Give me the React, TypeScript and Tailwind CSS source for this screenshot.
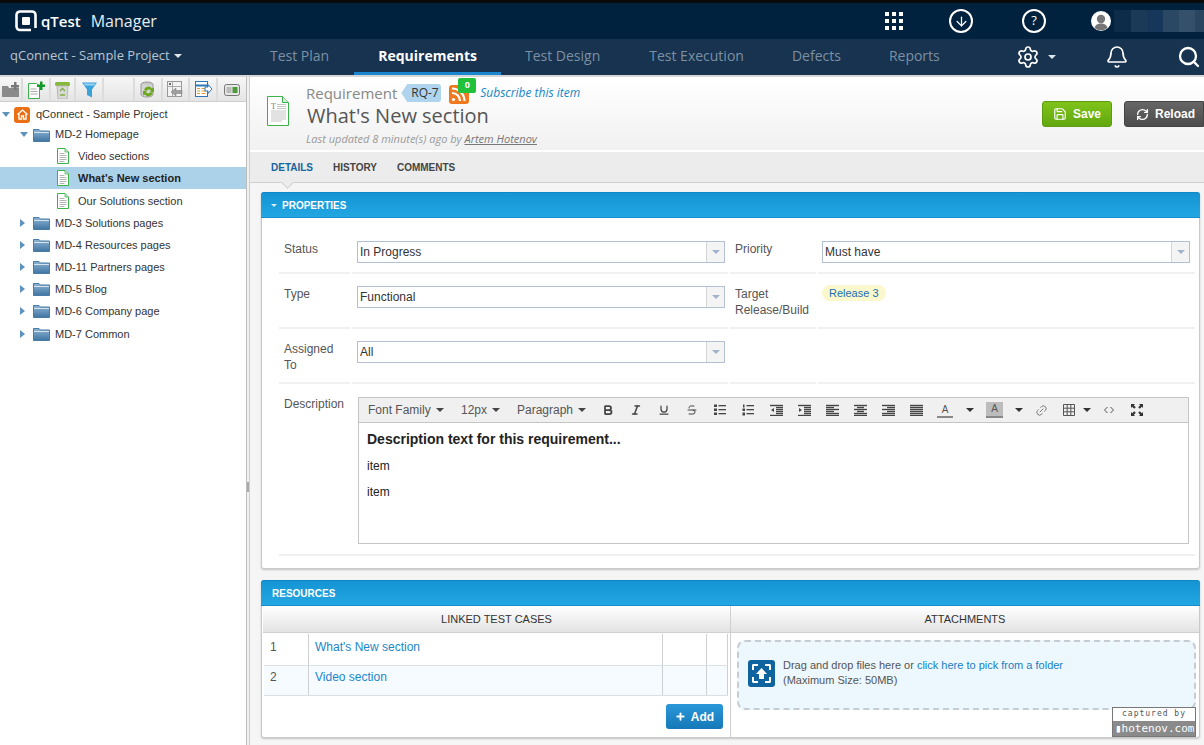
import React from 'react';
import { Bold, Italic, Underline, Strikethrough, Link2, Settings, Bell, Search, Save, RefreshCw, Plus, ArrowDown } from 'lucide-react';

const openSans = "font-['Open_Sans',sans-serif]";

const Caret = ({ className = 'border-t-[#333]' }: { className?: string }) => (
  <span className={`inline-block w-0 h-0 border-x-[4px] border-x-transparent border-t-[4px] ${className}`}></span>
);

const LogoMark = () => (
  <svg width="22" height="22" viewBox="0 0 22 22" className="shrink-0">
    <path d="M5 1.500h12a3.500 3.500 0 0 1 3.500 3.500v15h-15.500a3.500 3.500 0 0 1-3.500-3.500v-11.500a3.500 3.500 0 0 1 3.500-3.500z" fill="none" stroke="#fff" strokeWidth="2.600" />
    <rect x="7" y="7" width="8" height="8" rx="1" fill="#fff" />
    <rect x="16" y="18" width="7" height="5" fill="#00223f" />
  </svg>
);

const GridIcon = () => (
  <svg width="18" height="18" viewBox="0 0 18 18" fill="#fff">
    {[0, 7, 14].map(y => [0, 7, 14].map(x => <rect key={`${x}-${y}`} x={x} y={y} width="4" height="4" />))}
  </svg>
);

const Avatar = () => (
  <svg width="20" height="20" viewBox="0 0 20 20">
    <circle cx="10" cy="10" r="10" fill="#fff" />
    <circle cx="10" cy="8" r="4.200" fill="#777" />
    <path d="M3.500 17c1-3.500 3.500-4.500 6.500-4.500s5.500 1 6.500 4.500a10 10 0 0 1-13 0z" fill="#777" />
  </svg>
);

// tree folder, the blue gradient one
const Folder = () => (
  <svg width="17" height="14" viewBox="0 0 17 14">
    <defs>
      <linearGradient id="fold" x1="0" y1="0" x2="0" y2="1">
        <stop offset="0" stopColor="#8fb4d2" />
        <stop offset="1" stopColor="#3f75a3" />
      </linearGradient>
    </defs>
    <path d="M0.500 1.500h5.500l1.500 1.500h9v10.500h-16z" fill="url(#fold)" stroke="#4a7ba4" />
    <path d="M1 4.500h15" stroke="#d5e4ef" />
  </svg>
);

const DocIcon = () => (
  <svg width="12" height="16" viewBox="0 0 12 16">
    <path d="M0.500 0.500h7.500l3.500 3.500v11.500h-11z" fill="#fff" stroke="#3bb34a" />
    <path d="M8 0.500v3.500h3.500" fill="#bfe6c4" stroke="#3bb34a" strokeWidth="0.700" />
    <path d="M2.500 5.500h5M2.500 7.500h7M2.500 9.500h7M2.500 11.500h7M2.500 13.500h5" stroke="#b5b5b5" />
  </svg>
);

const BigDocIcon = () => (
  <svg width="22" height="30" viewBox="0 0 22 30">
    <path d="M0.500 0.500h15l6 6v23h-21z" fill="#fff" stroke="#3bb34a" />
    <path d="M15.500 0.500v6h6" fill="#d7efda" stroke="#3bb34a" />
    <text x="4" y="13" fontSize="8" fontFamily="Liberation Serif" fill="#777">T</text>
    <path d="M10 8.500h9M10 10.500h9M10 12.500h9M4 15h15M4 17h15M4 19h15M4 21h15M4 23h15M4 25h11" stroke="#c4c4c4" />
  </svg>
);

const Arrow = ({ open }: { open?: boolean }) =>
  open ? (
    <span className="inline-block w-0 h-0 border-x-[4px] border-x-transparent border-t-[5px] border-t-[#5e93bd]"></span>
  ) : (
    <span className="inline-block w-0 h-0 border-y-[4px] border-y-transparent border-l-[5px] border-l-[#5e93bd]"></span>
  );

const ToolBtn = ({ children, w = 'w-[25px]' }: { children?: React.ReactNode; w?: string }) => (
  <div className={`${w} h-full shrink-0 flex items-center justify-center border-r-2 border-r-[#dcdcdc]`}>{children}</div>
);

const TreeToolbar = () => (
  <div className="h-[25px] flex items-stretch bg-gradient-to-b from-[#f7f7f7] to-[#e4e4e4] border-b border-[#cfcfcf] pt-[1px]">
    <ToolBtn w="w-[23px]">
      <svg width="17" height="15" viewBox="0 0 17 15">
        <path d="M0 4h6l1 2h10v9h-17z" fill="#8a8a8a" />
        <path d="M9 3h3v-3h2.500v3h2.500v2.500h-2.500v2.500h-2.500v-2.500h-3z" fill="#777" />
      </svg>
    </ToolBtn>
    <ToolBtn w="w-[28px]">
      <svg width="17" height="18" viewBox="0 0 17 18">
        <path d="M0.500 2.500h8l3 3v12h-11z" fill="#fff" stroke="#3bb34a" />
        <path d="M2.500 8h6M2.500 10.500h7M2.500 13h7" stroke="#aaa" />
        <path d="M9 3.500h3v-3h2.500v3h2.500v2.500h-2.500v3h-2.500v-3h-3z" fill="#129a2a" />
      </svg>
    </ToolBtn>
    <ToolBtn>
      <svg width="15" height="18" viewBox="0 0 15 18">
        <rect x="0" y="1" width="15" height="4" rx="1.500" fill="#86b83a" />
        <path d="M2 5h11l-1 13h-9z" fill="#d9d9d9" stroke="#b8b8b8" />
        <path d="M5 10l2.500-2.500 2.500 2.500M5 14h5" stroke="#7fae3a" strokeWidth="1.300" fill="none" />
      </svg>
    </ToolBtn>
    <ToolBtn w="w-[28px]">
      <svg width="15" height="16" viewBox="0 0 15 16">
        <path d="M0 0.500h15l-5 7v8l-5-2.500v-5.500z" fill="#3aa3dc" />
        <path d="M1.500 1.500h12l-1.500 2h-9z" fill="#9ad4f2" />
      </svg>
    </ToolBtn>
    <ToolBtn w="w-[31px]" />
    <ToolBtn w="w-[28px]">
      <svg width="16" height="18" viewBox="0 0 16 18">
        <ellipse cx="7" cy="3.500" rx="6" ry="2.500" fill="#c8c8c8" stroke="#999" />
        <path d="M1 3.500v10c0 1.400 2.700 2.500 6 2.500s6-1.100 6-2.500v-10" fill="#d4d4d4" stroke="#999" />
        <path d="M4 9a4.500 4.500 0 0 1 8-1.500l2-1v4.500h-4l1-1a2.500 2.500 0 0 0-4.500 0z" fill="#6ca81e" />
        <path d="M13 12a4.500 4.500 0 0 1-8 1.500l-2 1v-4.500h4l-1 1a2.500 2.500 0 0 0 4.500 0z" fill="#6ca81e" />
      </svg>
    </ToolBtn>
    <ToolBtn w="w-[27px]">
      <svg width="17" height="17" viewBox="0 0 17 17">
        <rect x="0.500" y="0.500" width="14" height="15" fill="#f4f4f4" stroke="#999" />
        <path d="M0.500 5.500h14M5.500 0.500v15" stroke="#aaa" />
        <path d="M2 2l2 2M4 2l-2 2" stroke="#666" />
        <path d="M4 11l5-4v2.500h6v3h-6v2.500z" fill="#a0a0a0" stroke="#777" strokeWidth="0.500" />
      </svg>
    </ToolBtn>
    <ToolBtn w="w-[28px]">
      <svg width="17" height="17" viewBox="0 0 17 17">
        <rect x="0.500" y="0.500" width="12" height="15" fill="#fff" stroke="#2f78b7" />
        <path d="M0.500 4.500h12" stroke="#2f78b7" strokeWidth="2" />
        <path d="M2 7.500h3M2 10h3M2 12.500h3M6.500 7.500h4M6.500 10h4M6.500 12.500h4" stroke="#e0a030" />
        <path d="M10 6h3v-2.500l4 4.500-4 4.500v-2.500h-3z" fill="#fff" stroke="#2f78b7" />
      </svg>
    </ToolBtn>
    <div className="flex-1 flex items-center justify-center">
      <svg width="16" height="12" viewBox="0 0 16 12">
        <rect x="0.500" y="0.500" width="15" height="11" rx="2" fill="#e6e6e6" stroke="#777" />
        <rect x="2.500" y="3" width="5" height="6" fill="#bbb" />
        <rect x="8.500" y="3" width="5" height="6" fill="#4d9a3d" />
      </svg>
    </div>
  </div>
);

const FolderRow = ({ label, open, className = 'h-[22px]' }: { label: string; open?: boolean; className?: string }) => (
  <div className={`${className} flex items-center pl-[20px]`}>
    <span className="w-[13px] flex items-center"><Arrow open={open} /></span>
    <Folder />
    <span className="ml-[5px] text-[#333]">{label}</span>
  </div>
);

const DocRow = ({ label, active, className = 'h-[22px]' }: { label: string; active?: boolean; className?: string }) => (
  <div className={`${className} flex items-center pl-[57px] ${active ? 'bg-[#acd2ea] font-bold text-[#222]' : 'text-[#333]'}`}>
    <DocIcon />
    <span className="ml-[9px]">{label}</span>
  </div>
);

const Tree = () => (
  <div className="text-[11px] pt-[3px] font-['Liberation_Sans',sans-serif]">
    <div className="h-[19px] flex items-center pl-[2px]">
      <span className="w-[12px] flex items-center"><Arrow open /></span>
      <span className="w-[16px] h-[16px] rounded-[3px] bg-[#ea6f15] flex items-center justify-center">
        <svg width="11" height="11" viewBox="0 0 11 11" fill="none" stroke="#fff" strokeWidth="1.300">
          <path d="M0.500 5.500l5-4.500 5 4.500M2 5v5h2.500v-3h2v3h2.500v-5" />
        </svg>
      </span>
      <span className="ml-[6px] text-[#333]">qConnect - Sample Project</span>
    </div>
    <FolderRow label="MD-2 Homepage" open className="h-[21px]" />
    <DocRow label="Video sections" />
    <DocRow label="What's New section" active />
    <DocRow label="Our Solutions section" className="h-[23px] pt-[1px]" />
    <FolderRow label="MD-3 Solutions pages" />
    <FolderRow label="MD-4 Resources pages" />
    <FolderRow label="MD-11 Partners pages" />
    <FolderRow label="MD-5 Blog" />
    <FolderRow label="MD-6 Company page" />
    <FolderRow label="MD-7 Common" className="h-[23px] pt-[1px]" />
  </div>
);

const Select = ({ value, className }: { value: string; className: string }) => (
  <div className={`h-[22px] flex items-stretch border border-[#b3bfd3] bg-white ${className}`}>
    <span className="flex-1 pl-[2px] leading-[20px] text-[12px] text-[#333]">{value}</span>
    <span className="w-[18px] border-l border-[#d5d5d5] bg-[#f4f4f4] flex items-center justify-center">
      <Caret className="border-t-[#9fb3cf]" />
    </span>
  </div>
);

const Label = ({ children, className = '' }: { children: React.ReactNode; className?: string }) => (
  <div className={`text-[12px] leading-[16px] text-[#555] ${className}`}>{children}</div>
);

const LinesIcon = ({ rows }: { rows: [number, number][] }) => (
  <svg width="13" height="12" viewBox="0 0 13 12" stroke="#444" strokeWidth="1.400">
    {rows.map(([a, b], i) => <path key={i} d={`M${a} ${1 + i * 2}.5H${b}`} />)}
  </svg>
);

const left: [number, number][] = [[0, 13], [0, 8], [0, 13], [0, 8], [0, 13], [0, 13]];
const center: [number, number][] = [[0, 13], [3, 10], [0, 13], [3, 10], [0, 13], [0, 13]];
const right: [number, number][] = [[0, 13], [5, 13], [0, 13], [5, 13], [0, 13], [0, 13]];
const justify: [number, number][] = [[0, 13], [0, 13], [0, 13], [0, 13], [0, 13], [0, 13]];
const indent: [number, number][] = [[0, 13], [6, 13], [6, 13], [6, 13], [6, 13], [0, 13]];

const EdBtn = ({ children, w = 'w-[28px]' }: { children: React.ReactNode; w?: string }) => (
  <span className={`${w} shrink-0 flex items-center justify-center`}>{children}</span>
);

const EditorToolbar = () => (
  <div className="h-[25px] bg-[#f0f0f0] border-b border-[#c5c5c5] flex items-center text-[12px] text-[#555] pl-[9px]">
    <span className="flex items-center gap-[5px] w-[93px]">Font Family <Caret className="border-t-[#444]" /></span>
    <span className="flex items-center gap-[5px] w-[56px]">12px <Caret className="border-t-[#444]" /></span>
    <span className="flex items-center gap-[5px] w-[77px]">Paragraph <Caret className="border-t-[#444]" /></span>
    <EdBtn><Bold size={12} strokeWidth={3.500} color="#444" /></EdBtn>
    <EdBtn><Italic size={12} strokeWidth={3} color="#444" /></EdBtn>
    <EdBtn><Underline size={12} strokeWidth={2.500} color="#444" /></EdBtn>
    <EdBtn><Strikethrough size={12} strokeWidth={2} color="#444" /></EdBtn>
    <EdBtn>
      <svg width="12" height="12" viewBox="0 0 12 12" fill="#444">
        <rect x="0" y="0.500" width="3" height="2.500" /><rect x="0" y="4.500" width="3" height="2.500" /><rect x="0" y="8.500" width="3" height="2.500" />
        <rect x="4.500" y="1" width="7.500" height="1.300" /><rect x="4.500" y="5" width="7.500" height="1.300" /><rect x="4.500" y="9" width="7.500" height="1.300" />
      </svg>
    </EdBtn>
    <EdBtn>
      <svg width="12" height="12" viewBox="0 0 12 12" fill="#444">
        <rect x="1" y="0.500" width="1.500" height="3" /><rect x="0.500" y="4.500" width="2.500" height="2.500" /><rect x="0.500" y="8.500" width="2.500" height="3" />
        <rect x="4.500" y="1" width="7.500" height="1.300" /><rect x="4.500" y="5" width="7.500" height="1.300" /><rect x="4.500" y="9" width="7.500" height="1.300" />
      </svg>
    </EdBtn>
    <EdBtn>
      <span className="relative flex">
        <LinesIcon rows={indent} />
        <span className="absolute left-[1px] top-[4px] w-0 h-0 border-y-[2px] border-y-transparent border-r-[3px] border-r-[#444]"></span>
      </span>
    </EdBtn>
    <EdBtn>
      <span className="relative flex">
        <LinesIcon rows={indent} />
        <span className="absolute left-[1px] top-[4px] w-0 h-0 border-y-[2px] border-y-transparent border-l-[3px] border-l-[#444]"></span>
      </span>
    </EdBtn>
    <EdBtn><LinesIcon rows={left} /></EdBtn>
    <EdBtn><LinesIcon rows={center} /></EdBtn>
    <EdBtn><LinesIcon rows={right} /></EdBtn>
    <EdBtn><LinesIcon rows={justify} /></EdBtn>
    <EdBtn w="w-[30px]">
      <span className="w-[16px] text-center text-[10px] leading-[13px] border-b-2 border-[#888]">A</span>
    </EdBtn>
    <EdBtn w="w-[19px]"><Caret className="border-t-[#333]" /></EdBtn>
    <EdBtn w="w-[31px]">
      <span className="w-[17px] h-[16px] text-center text-[10px] leading-[14px] bg-[#bcbcbc] border-b-2 border-[#888]">A</span>
    </EdBtn>
    <EdBtn w="w-[17px]"><Caret className="border-t-[#333]" /></EdBtn>
    <EdBtn w="w-[29px]"><Link2 size={13} strokeWidth={1.500} color="#666" className="-rotate-45" /></EdBtn>
    <EdBtn w="w-[26px]">
      <svg width="12" height="12" viewBox="0 0 12 12" fill="none" stroke="#555" strokeWidth="1">
        <path d="M0.500 0.500h11v11h-11zM0.500 4.200h11M0.500 7.800h11M4.200 0.500v11M7.800 0.500v11" />
      </svg>
    </EdBtn>
    <EdBtn w="w-[10px]"><Caret className="border-t-[#333]" /></EdBtn>
    <EdBtn w="w-[34px]">
      <svg width="10" height="8" viewBox="0 0 10 8" fill="none" stroke="#555"><path d="M3.500 1l-3 3 3 3M6.500 1l3 3-3 3" /></svg>
    </EdBtn>
    <EdBtn w="w-[21px]">
      <svg width="12" height="12" viewBox="0 0 12 12" fill="#333">
        <path d="M0 0h4l-1.200 1.200 2 2-1.600 1.600-2-2-1.200 1.200zM12 0v4l-1.200-1.200-2 2-1.600-1.600 2-2-1.200-1.200zM0 12v-4l1.200 1.200 2-2 1.600 1.600-2 2 1.200 1.200zM12 12h-4l1.200-1.200-2-2 1.600-1.600 2 2 1.200-1.200z" />
      </svg>
    </EdBtn>
  </div>
);

const SectionBar = ({ children, className }: { children: React.ReactNode; className?: string }) => (
  <div className={`bg-gradient-to-b from-[#1494d4] to-[#22a7e2] border-t border-[#0f86c6] rounded-t-[3px] border-b border-b-[#1a8ccb] flex items-center text-white font-bold text-[10px] uppercase ${className}`}>
    {children}
  </div>
);

const ColHead = ({ children }: { children: React.ReactNode }) => (
  <div className="h-[27px] pt-[1px] flex items-center justify-center text-[11px] text-[#333] bg-gradient-to-b from-white to-[#e3e3e3] border-b border-[#cfcfcf]">{children}</div>
);

const TestRow = ({ n, label, alt }: { n: number; label: string; alt?: boolean }) => (
  <div className={`flex items-stretch border-b border-[#dcdfe3] ${alt ? 'h-[30px] bg-[#f6fbff]' : 'h-[32px] bg-white'}`}>
    <span className={`w-[45px] pl-[6px] text-[#555] border-r border-[#cfcfcf] ${alt ? 'pt-[2px]' : 'pt-[4px]'}`}>{n}</span>
    <span className={`flex-1 pl-[6px] text-[#1a87c9] ${alt ? 'pt-[2px]' : 'pt-[4px]'}`}>{label}</span>
    <span className="w-[44px] border-l border-[#cfcfcf]"></span>
    <span className="w-[22px] border-l border-r border-[#cfcfcf]"></span>
  </div>
);

export default function App() {
  return (
    <div className="w-[1204px] h-[745px] overflow-hidden flex flex-col bg-[#f5f5f5] font-['Liberation_Sans',sans-serif]">
      <div className="h-[3px] bg-[#0a0a0a] shrink-0"></div>

      {/* top bar */}
      <div className="h-[36px] shrink-0 bg-[#00223f] flex items-center pl-[15px]">
        <div className="w-[870px] flex items-center">
          <LogoMark />
          <span className={`ml-[4px] text-white text-[15px] font-semibold ${openSans}`}>qTest</span>
          <span className={`ml-[10px] text-[#e8edf2] text-[16px] ${openSans}`}>Manager</span>
        </div>
        <GridIcon />
        <span className="ml-[46px] w-[24px] h-[24px] rounded-full border-2 border-white flex items-center justify-center">
          <ArrowDown size={15} color="#fff" strokeWidth={2} />
        </span>
        <span className={`ml-[49px] w-[24px] h-[24px] rounded-full border-2 border-white flex items-center justify-center text-white text-[13px] ${openSans}`}>?</span>
        <div className="ml-[45px]"><Avatar /></div>
        <div className="ml-[3px] flex-1 h-[22px] flex">
          <span className="w-[17px] bg-[#0c2c4a]"></span>
          <span className="w-[16px] bg-[#1a3a58]"></span>
          <span className="w-[16px] bg-[#16365a]"></span>
          <span className="w-[16px] bg-[#2a4863]"></span>
          <span className="w-[16px] bg-[#35506a]"></span>
          <span className="flex-1 bg-[#2a4560]"></span>
        </div>
      </div>

      {/* module nav */}
      <div className={`h-[36px] shrink-0 bg-[#17334f] flex items-stretch text-[14px] whitespace-nowrap ${openSans}`}>
        <div className="w-[246px] pl-[10px] pb-[2px] flex items-center gap-[4px] text-[#b9c6d2] text-[13px]">
          qConnect - Sample Project <Caret className="border-t-[#dfe6ec]" />
        </div>
        <div className="w-[702px] flex items-stretch text-[#7d90a3]">
          <div className="px-[24px] pb-[4px] flex items-center">Test Plan</div>
          <div className="ml-[1px] px-[24px] flex items-center font-bold text-white border-b-[3px] border-[#1a87d0]">Requirements</div>
          <div className="px-[24px] pr-[25px] pb-[4px] flex items-center">Test Design</div>
          {['Test Execution', 'Defects', 'Reports'].map(t => (
            <div key={t} className="px-[24px] pb-[4px] flex items-center">{t}</div>
          ))}
        </div>
        <div className="ml-[68px] flex items-center">
          <Settings size={24} color="#fff" strokeWidth={1.700} />
          <span className="ml-[8px] flex"><Caret className="border-t-[#dfe6ec]" /></span>
          <Bell size={24} color="#fff" strokeWidth={1.700} className="ml-[49px]" />
          <Search size={24} color="#fff" strokeWidth={2.300} className="ml-[48px]" />
        </div>
      </div>

      <div className="flex-1 flex min-h-0 border-t-2 border-[#d6d6d6]">
        {/* requirement tree */}
        <div className="w-[247px] shrink-0 bg-white border-r border-[#bdbdbd]">
          <TreeToolbar />
          <Tree />
        </div>

        {/* splitter */}
        <div className="w-[3px] shrink-0 bg-[#f0f0f0] border-r border-[#cfcfcf] flex items-center justify-center pt-[152px]">
          <span className="w-[2px] h-[10px] bg-[#aaa]"></span>
        </div>

        {/* details */}
        <div className="flex-1 min-w-0 flex flex-col">
          <div className="h-[75px] shrink-0 flex bg-gradient-to-b from-white to-[#f1f1f1] border-b-2 border-white relative">
            <div className="ml-[17px] mt-[19px]"><BigDocIcon /></div>
            <div className={`ml-[17px] ${openSans}`}>
              <div className="flex items-center h-[18px] mt-[7px]">
                <span className="text-[15px] text-[#888]">Requirement</span>
                <span className="relative ml-[4px] h-[18px] w-[40px] bg-[#aed4ee] rounded-r-[3px] text-[12px] leading-[18px] text-[#333] pl-[10px] [clip-path:polygon(6px_0,100%_0,100%_100%,6px_100%,0_50%)]">RQ-7</span>
                <span className="relative ml-[8px] w-[20px] h-[19px] mt-[2px] rounded-[3px] bg-[#f0781e] shrink-0">
                  <svg width="20" height="19" viewBox="0 0 20 19" fill="none" stroke="#fff" strokeWidth="2.200">
                    <path d="M3 8a8 8 0 0 1 8 8M3 3.500a12.500 12.500 0 0 1 12.500 12.500" />
                    <circle cx="4.500" cy="14.500" r="1.600" fill="#fff" stroke="none" />
                  </svg>
                  <span className="absolute -top-[7px] left-[9px] w-[18px] h-[15px] rounded-[2px] bg-[#21c13a] text-white text-[9px] font-bold leading-[14px] text-center">0</span>
                </span>
                <span className="ml-[11px] text-[12px] italic text-[#1787c8]">Subscribe this item</span>
              </div>
              <div className="ml-[1px] text-[20px] leading-[28px] text-[#555]">What's New section</div>
              <div className="text-[11px] leading-[15px] italic text-[#9a9a9a] mt-[1px]">
                Last updated 8 minute(s) ago by <span className="underline text-[#777]">Artem Hotenov</span>
              </div>
            </div>
            <div className="absolute left-[792px] top-[24px] w-[70px] h-[26px] rounded-[3px] border border-[#5d9c0f] bg-gradient-to-b from-[#7fc31a] to-[#62a80e] flex items-center justify-center gap-[6px] text-white text-[12px] font-bold">
              <Save size={14} strokeWidth={2} /> Save
            </div>
            <div className="absolute left-[874px] top-[24px] w-[80px] h-[26px] rounded-l-[3px] border border-[#444] bg-gradient-to-b from-[#666] to-[#4c4c4c] flex items-center pl-[11px] gap-[6px] text-white text-[12px] font-bold">
              <RefreshCw size={13} strokeWidth={2.500} /> Reload
            </div>
          </div>

          <div className="h-[31px] shrink-0 bg-[#ececec] border-b border-[#cfcfcf] flex items-center gap-[20px] pl-[21px] text-[10px] font-bold uppercase text-[#444] relative">
            <span className="text-[#17659e]">Details</span>
            <span>History</span>
            <span>Comments</span>
            <span className="absolute left-[33px] -bottom-[5px] w-[9px] h-[9px] bg-[#ececec] border-r border-b border-[#cfcfcf] rotate-45"></span>
          </div>

          <div className="flex-1 min-h-0 pl-[11px] pr-[4px] pt-[9px]">
            {/* properties */}
            <div className="h-[377px] bg-white border border-[#c9c9c9] rounded-[3px] shadow-[0_1px_2px_rgba(0,0,0,0.2)]">
              <SectionBar className="h-[26px] pl-[10px] gap-[5px] -mx-px -mt-px">
                <span className="w-0 h-0 border-x-[3px] border-x-transparent border-t-[3px] border-t-[#d5eefa]"></span>
                Properties
              </SectionBar>
              <div className="pl-[17px] pr-[4px] pt-[10px]">
                <div className="flex gap-[2px] h-[46px]">
                  <div className="w-[71px] border-b-2 border-[#f0f0f0] pl-[5px] pt-[13px]"><Label>Status</Label></div>
                  <div className="w-[376px] border-b-2 border-[#f0f0f0] pl-[5px] pt-[13px]"><Select value="In Progress" className="w-[368px]" /></div>
                  <div className="w-[86px] border-b-2 border-[#f0f0f0] pl-[5px] pt-[13px]"><Label>Priority</Label></div>
                  <div className="flex-1 border-b-2 border-[#f0f0f0] pl-[4px] pt-[13px]"><Select value="Must have" className="w-[368px]" /></div>
                </div>
                <div className="flex gap-[2px] h-[55px]">
                  <div className="w-[71px] border-b-2 border-[#f0f0f0] pl-[5px] pt-[12px]"><Label>Type</Label></div>
                  <div className="w-[376px] border-b-2 border-[#f0f0f0] pl-[5px] pt-[12px]"><Select value="Functional" className="w-[368px]" /></div>
                  <div className="w-[86px] border-b-2 border-[#f0f0f0] pl-[5px] pt-[12px]"><Label>Target Release/Build</Label></div>
                  <div className="flex-1 border-b-2 border-[#f0f0f0] pl-[4px] pt-[11px]">
                    <span className="block w-fit h-[16px] rounded-full bg-[#fbf8cd] px-[7px] text-[11px] leading-[16px] text-[#1a6fb5]">Release 3</span>
                  </div>
                </div>
                <div className="flex gap-[2px] h-[55px]">
                  <div className="w-[71px] border-b-2 border-[#f0f0f0] pl-[5px] pt-[12px]"><Label className="w-[50px]">Assigned To</Label></div>
                  <div className="w-[376px] border-b-2 border-[#f0f0f0] pl-[5px] pt-[12px]"><Select value="All" className="w-[368px]" /></div>
                  <div className="w-[86px] border-b-2 border-[#f0f0f0]"></div>
                  <div className="flex-1 border-b-2 border-[#f0f0f0]"></div>
                </div>
                <div className="flex h-[172px] border-b-2 border-[#f0f0f0]">
                  <div className="w-[79px] pl-[5px] pt-[12px]"><Label>Description</Label></div>
                  <div className="w-[831px] h-[147px] mt-[13px] border border-[#c5c5c5] flex flex-col">
                    <EditorToolbar />
                    <div className="pl-[8px] pt-[9px] text-[12px] text-[#222]">
                      <div className="font-bold text-[14px] leading-[15px]">Description text for this requirement...</div>
                      <div className="mt-[12px] leading-[14px]">item</div>
                      <div className="mt-[12px] leading-[14px]">item</div>
                    </div>
                  </div>
                </div>
              </div>
            </div>

            {/* resources */}
            <div className="mt-[11px] h-[158px] bg-white border border-[#c9c9c9] rounded-[3px] shadow-[0_1px_2px_rgba(0,0,0,0.2)] relative">
              <SectionBar className="h-[26px] pl-[11px] -mx-px -mt-px">Resources</SectionBar>
              <div className="flex h-[132px] text-[12px]">
                <div className="w-[469px] pl-[1px] border-r border-[#cfcfcf]">
                  <ColHead>LINKED TEST CASES</ColHead>
                  <div className="pl-[1px] pr-[2px] pt-[1px]">
                    <TestRow n={1} label="What's New section" />
                    <TestRow n={2} label="Video section" alt />
                  </div>
                  <div className="flex justify-end pr-[7px] pt-[8px]">
                    <span className="w-[57px] h-[25px] rounded-[3px] bg-gradient-to-b from-[#2a97d9] to-[#1579b8] flex items-center justify-center gap-[5px] text-white text-[12px] font-bold">
                      <Plus size={11} strokeWidth={4} /> Add
                    </span>
                  </div>
                </div>
                <div className="flex-1">
                  <ColHead>ATTACHMENTS</ColHead>
                  <div className="ml-[6px] mr-[3px] mt-[7px] h-[70px] pb-[4px] rounded-[8px] border-2 border-dashed border-[#c6ccd1] bg-[#ecf7fe] flex items-center pl-[9px] text-[11px] leading-[15px] text-[#555]">
                    <span className="w-[27px] h-[27px] rounded-[3px] bg-[#0f639f] flex items-center justify-center relative shrink-0">
                      <span className="absolute inset-[4px] border-2 border-dashed border-white rounded-[2px]"></span>
                      <svg width="13" height="13" viewBox="0 0 13 13" fill="#fff" className="relative">
                        <path d="M6.500 1l5.500 6h-3v5h-5v-5h-3z" />
                      </svg>
                    </span>
                    <div className="ml-[8px]">
                      <div>Drag and drop files here or <span className="text-[#1a7fc4]">click here to pick from a folder</span></div>
                      <div>(Maximum Size: 50MB)</div>
                    </div>
                  </div>
                </div>
              </div>
              {/* capture watermark */}
              <div className="absolute right-[3px] bottom-[0px] w-[84px] h-[30px] border border-[#777] flex flex-col">
                <div className="h-[13px] bg-white text-[8px] leading-[12px] text-center tracking-[1px] text-[#555] font-['DejaVu_Sans_Mono',monospace]">captured by</div>
                <div className="flex-1 bg-[#8a8a8a] text-white text-[11px] leading-[15px] pl-[2px] font-['DejaVu_Sans_Mono',monospace]">▮hotenov.com</div>
              </div>
            </div>
          </div>
        </div>
      </div>
    </div>
  );
}
